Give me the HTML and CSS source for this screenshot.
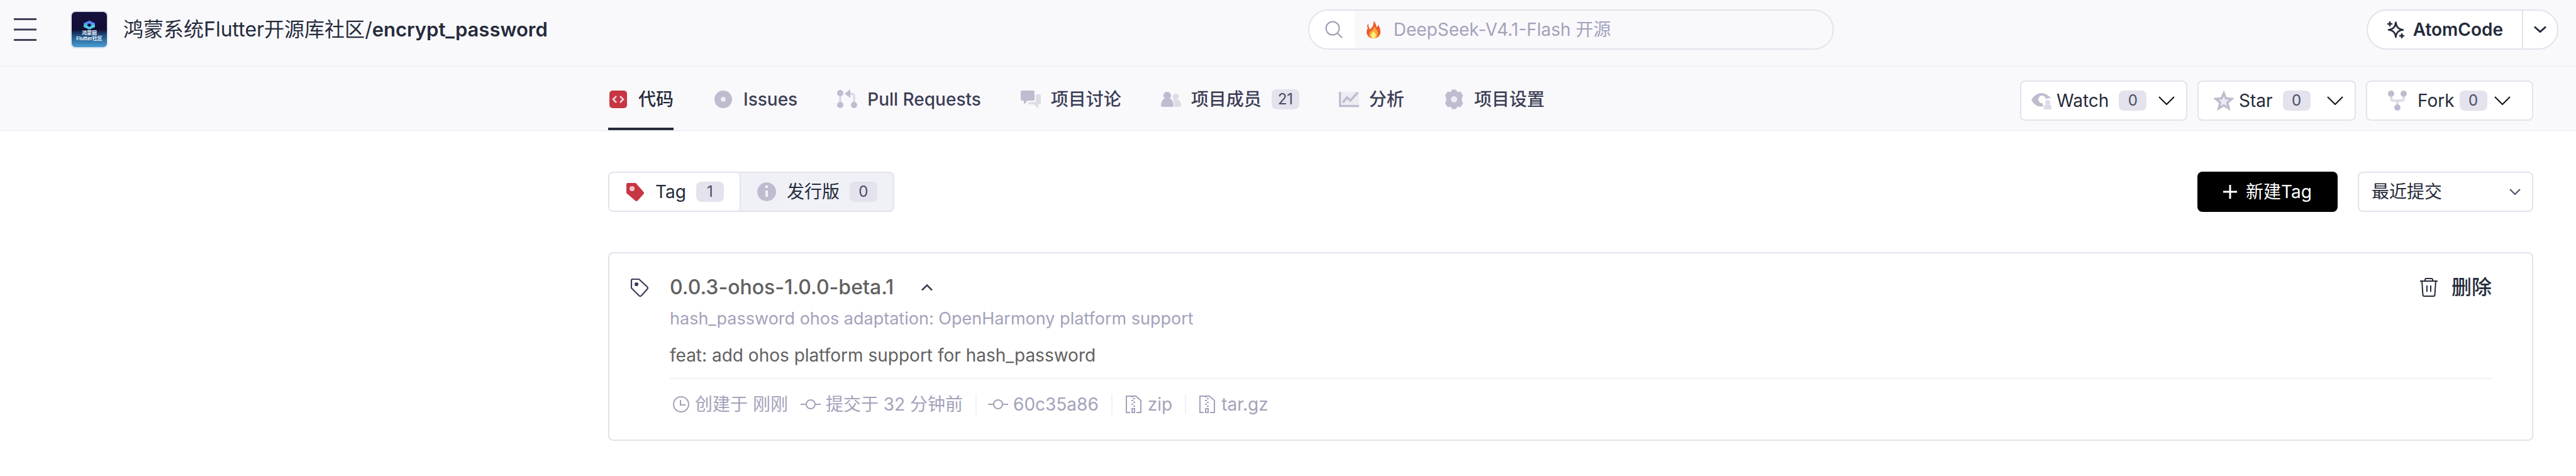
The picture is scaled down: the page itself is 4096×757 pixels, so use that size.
FILE: index.html
```html
<!DOCTYPE html>
<html lang="zh-CN">
<head>
    <meta charset="UTF-8">
    <meta name="viewport" content="width=device-width, initial-scale=1.0">
    <title>encrypt_password - Tag</title>
    <link rel="stylesheet" href="styles.css">
</head>
<body>
    <header class="topbar">
        <div class="topbar-left">
            <button class="menu-btn" type="button" aria-label="菜单">
                <svg width="36" height="36" viewBox="0 0 36 36" fill="none" stroke="#3f4158" stroke-width="3"><path d="M0 1.5h36M0 18h36M0 34.5h36"/></svg>
            </button>
            <div class="logo" aria-hidden="true">
                <svg width="20" height="16" viewBox="0 0 20 16"><path d="M10 1l9 4v6l-9 4-9-4V5z" fill="#4fc9e6"/><path d="M10 1l9 4v3l-9-3-9 3V5z" fill="#5b83f2"/><path d="M10 5l4 3-4 3-4-3z" fill="#0d1238"/></svg>
                <span class="logo-text">鸿蒙圈</span>
                <span class="logo-text">Flutter社区</span>
            </div>
            <h1 class="repo-title"><a href="#">鸿蒙系统Flutter开源库社区</a>/<a href="#" class="repo-name">encrypt_password</a></h1>
        </div>

        <form class="search">
            <label class="search-icon" for="search">
                <svg width="28" height="28" viewBox="0 0 28 28" fill="none" stroke="#9b9bb0" stroke-width="2"><circle cx="12" cy="12" r="10.5"/><path d="M20 20l7 7"/></svg>
            </label>
            <div class="search-body">
                <svg width="24" height="30" viewBox="0 0 24 30"><path d="M12 1c4 4 4 7 5 10 2 0 2-3 2-4 3 4 4 8 4 12 0 6-5 10-11 10S1 25 1 19c0-4 2-6 3-9 1 2 2 3 2 5 4-3 7-8 6-14z" fill="#ec5a2c"/><path d="M2 8l2-2 0 5-2 1z" fill="#e9622f"/><path d="M13 9c1 4 6 6 6 12 0 5-3 8-7 8s-7-3-7-7 4-4 6-7c1-2 2-4 2-6z" fill="#f9a53a"/><path d="M12 17c1 3 4 4 4 8 0 2-2 4-4 4s-4-2-4-4c0-4 3-5 4-8z" fill="#fff27a"/></svg>
                <input id="search" type="text" placeholder="DeepSeek-V4.1-Flash 开源">
            </div>
        </form>

        <div class="atom">
            <button class="atom-main" type="button">
                <svg width="28" height="28" viewBox="0 0 28 28" fill="none" stroke="#252b3a" stroke-width="2.6" stroke-linejoin="round" stroke-linecap="round"><path d="M14.500 2.500c.8 7.500 4 10.700 11.500 12-7.500 1-10.700 4-11.500 11.500-1-7.500-4-10.500-11.500-11.500 7.500-1.300 10.500-4.500 11.500-12z"/><path d="M5 2v6M2 5h6M24 21v6M21 24h6"/></svg>
                AtomCode
            </button>
            <button class="atom-more" type="button" aria-label="更多">
                <svg width="20" height="12" viewBox="0 0 20 12" fill="none" stroke="#252b3a" stroke-width="3"><path d="M1 1.500l9 8 9-8"/></svg>
            </button>
        </div>
    </header>

    <nav class="navbar">
        <div class="nav-tabs">
            <a href="#" class="nav-item active">
                <svg width="32" height="32" viewBox="0 0 32 32"><rect x="2" y="2" width="28" height="28" rx="5" fill="#c73643"/><path d="M13 11l-5 5 5 5M19 11l5 5-5 5" fill="none" stroke="#f3d3d7" stroke-width="2.600"/></svg>
                代码
            </a>
            <a href="#" class="nav-item">
                <svg width="32" height="32" viewBox="0 0 32 32"><circle cx="16" cy="16" r="14" fill="#bfbcd0"/><circle cx="16" cy="16" r="4" fill="#ececf2"/></svg>
                Issues
            </a>
            <a href="#" class="nav-item">
                <svg width="32" height="32" viewBox="0 0 32 32"><path d="M5 6v20M20 7h3q4 0 4 5v14" fill="none" stroke="#dedde7" stroke-width="4"/><g fill="#bfbcd0"><circle cx="5" cy="6" r="5"/><circle cx="5" cy="25" r="5"/><circle cx="27" cy="25" r="5"/><path d="M12 7l9-7v14z"/></g></svg>
                Pull Requests
            </a>
            <a href="#" class="nav-item">
                <svg width="32" height="32" viewBox="0 0 32 32"><path d="M24 8h6q2 0 2 2v12q0 2-2 2h-2v7l-7-7h-9q-1 0-1-1l3-3h8q2 0 2-2z" fill="#dedde7"/><path d="M2 2h18q2 0 2 2v12q0 2-2 2h-9l-6 6v-6H2q-2 0-2-2V4q0-2 2-2z" fill="#bfbcd0"/></svg>
                项目讨论
            </a>
            <a href="#" class="nav-item">
                <svg width="32" height="32" viewBox="0 0 32 32"><path d="M20 28h10q2 0 2-2c0-6-3-9-6-10a5 5 0 1 0-5 0l-2 1c2 3 3 7 1 11z" fill="#dedde7"/><path d="M10 4a6 6 0 0 1 4 10.500c4 2 6 6 6 11.500q0 2-2 2H2q-2 0-2-2c0-5 2-9.500 6-11.500A6 6 0 0 1 10 4z" fill="#bfbcd0"/></svg>
                项目成员
                <span class="badge">21</span>
            </a>
            <a href="#" class="nav-item">
                <svg width="32" height="32" viewBox="0 0 32 32"><path d="M3 4h29v20H3z" fill="#ececf2"/><path d="M1.500 4v22.500H32" fill="none" stroke="#bfbcd0" stroke-width="3.500"/><path d="M6 21l7-8 5 5L30 5" fill="none" stroke="#bfbcd0" stroke-width="3.500"/></svg>
                分析
            </a>
            <a href="#" class="nav-item">
                <svg width="32" height="32" viewBox="0 0 32 32"><path d="M13 1h6l2 4 5-1 4 6-2 3v6l2 3-4 6-5-1-2 4h-6l-2-4-5 1-4-6 2-3v-6l-2-3 4-6 5 1z" fill="#bfbcd0" stroke="#bfbcd0" stroke-linejoin="round"/><circle cx="16" cy="16" r="5" fill="#ececf2"/></svg>
                项目设置
            </a>
        </div>

        <div class="repo-actions">
            <div class="split watch">
                <button class="split-main" type="button">
                    <svg width="32" height="32" viewBox="0 0 32 32"><path d="M0 15C4 8 10 4 16 4s12 4 16 9c-4-2-7-1-9 1a6 6 0 1 0-5 6l1 5C10 27 4 22 0 15z" fill="#bfbcd0"/><path d="M26 15a4 4 0 0 1 3 7q3 1 3 4v4H20v-4q0-3 3-4a4 4 0 0 1 3-7z" fill="#dedde7"/></svg>
                    <span>Watch</span>
                    <span class="badge">0</span>
                </button>
                <button class="split-more" type="button" aria-label="Watch 选项">
                    <svg width="26" height="14" viewBox="0 0 26 14" fill="none" stroke="#111" stroke-width="2"><path d="M1 1l12 12L25 1"/></svg>
                </button>
            </div>
            <div class="split star">
                <button class="split-main" type="button">
                    <svg width="32" height="32" viewBox="0 0 32 32"><path d="M16 4l3.500 8.500 9.500.7-7.300 6 2.300 9.300-8-5-8 5 2.300-9.300-7.300-6 9.500-.7z" fill="#ececf2" stroke="#bfbcd0" stroke-width="3.500"/></svg>
                    <span>Star</span>
                    <span class="badge">0</span>
                </button>
                <button class="split-more" type="button" aria-label="Star 选项">
                    <svg width="26" height="14" viewBox="0 0 26 14" fill="none" stroke="#111" stroke-width="2"><path d="M1 1l12 12L25 1"/></svg>
                </button>
            </div>
            <div class="split fork">
                <button class="split-main" type="button">
                    <svg width="32" height="32" viewBox="0 0 32 32"><path d="M6 6v6q0 4 4 4h12q4 0 4-4V6M16 16v10" fill="none" stroke="#dedde7" stroke-width="4"/><g fill="#bfbcd0"><circle cx="6" cy="5" r="5"/><circle cx="26" cy="5" r="5"/><circle cx="16" cy="27" r="5"/></g></svg>
                    <span>Fork</span>
                    <span class="badge">0</span>
                </button>
                <button class="split-more" type="button" aria-label="Fork 选项">
                    <svg width="26" height="14" viewBox="0 0 26 14" fill="none" stroke="#111" stroke-width="2"><path d="M1 1l12 12L25 1"/></svg>
                </button>
            </div>
        </div>
    </nav>

    <main class="content">
        <div class="toolbar">
            <div class="tabs">
                <button class="tab selected" type="button">
                    <svg width="32" height="32" viewBox="0 0 32 32"><path d="M4 2h13l12 14q2 2 0 4l-9 10q-2 2-4 0L2 18V4q0-2 2-2z" fill="#c73643"/><circle cx="11" cy="11" r="4" fill="#f0c4c9"/></svg>
                    Tag
                    <span class="badge">1</span>
                </button>
                <button class="tab" type="button">
                    <svg width="32" height="32" viewBox="0 0 32 32"><circle cx="16" cy="16" r="15" fill="#bfbcd0"/><path d="M14 6h4v4h-4zM14 14h4v10h-4z" fill="#f0f1f7"/></svg>
                    发行版
                    <span class="badge">0</span>
                </button>
            </div>
            <div class="toolbar-right">
                <button class="new-btn" type="button">
                    <svg width="22" height="22" viewBox="0 0 22 22" stroke="#fff" stroke-width="3"><path d="M11 0v22M0 11h22"/></svg>
                    新建Tag
                </button>
                <div class="sort">
                    <select aria-label="排序">
                        <option>最近提交</option>
                        <option>最早提交</option>
                    </select>
                    <svg class="sort-arrow" width="18" height="10" viewBox="0 0 18 10" fill="none" stroke="#4a4c60" stroke-width="2"><path d="M1 1l8 8 8-8"/></svg>
                </div>
            </div>
        </div>

        <article class="tag-card">
            <svg class="tag-icon" width="32" height="32" viewBox="0 0 32 32" fill="none" stroke="#3c3e55" stroke-width="2.200" stroke-linejoin="round"><path d="M4 3h11l13 12q2 2 0 4l-9 10q-2 2-4 0L3 17V4z"/><circle cx="11" cy="11" r="2" fill="#3c3e55"/></svg>
            <div class="tag-body">
                <div class="tag-head">
                    <a href="#" class="tag-name">0.0.3-ohos-1.0.0-beta.1</a>
                    <button class="toggle" type="button" aria-label="收起">
                        <svg width="18" height="12" viewBox="0 0 18 12" fill="none" stroke="#3c3e55" stroke-width="2.500"><path d="M1 10.500l8-8 8 8"/></svg>
                    </button>
                    <button class="delete" type="button">
                        <svg width="32" height="32" viewBox="0 0 32 32" fill="none" stroke="#252b3a" stroke-width="2"><path d="M2 6h28M10 6V4q0-2 2-2h8q2 0 2 2v2M5 6l1.500 22q0 2 2 2h15q2 0 2-2L27 6M13 13v10M19 13v10"/></svg>
                        删除
                    </button>
                </div>
                <p class="tag-desc">hash_password ohos adaptation: OpenHarmony platform support</p>
                <p class="tag-commit">feat: add ohos platform support for hash_password</p>
                <div class="tag-meta">
                    <span class="meta-item">
                        <svg width="32" height="32" viewBox="0 0 32 32" fill="none" stroke="#a3a2ba" stroke-width="2"><circle cx="18" cy="16" r="12"/><path d="M17 9v8h8"/></svg>
                        创建于 刚刚
                    </span>
                    <span class="meta-item">
                        <svg width="32" height="32" viewBox="0 0 32 32" fill="none" stroke="#a3a2ba" stroke-width="2"><circle cx="16" cy="16" r="7"/><path d="M0 16h9M23 16h9"/></svg>
                        提交于 32 分钟前
                    </span>
                    <a href="#" class="meta-item divided">
                        <svg width="32" height="32" viewBox="0 0 32 32" fill="none" stroke="#a3a2ba" stroke-width="2"><circle cx="16" cy="16" r="7"/><path d="M0 16h9M23 16h9"/></svg>
                        60c35a86
                    </a>
                    <a href="#" class="meta-item divided">
                        <svg width="30" height="32" viewBox="0 0 30 32" fill="none" stroke="#a3a2ba" stroke-width="2"><path d="M10 29H4V3h15l8 7v19h-7M12 4h3M15 7h3M12 10h3M15 13h3M12 16h3M15 19h3M13 23h4v6h-4z"/></svg>
                        zip
                    </a>
                    <a href="#" class="meta-item divided">
                        <svg width="30" height="32" viewBox="0 0 30 32" fill="none" stroke="#a3a2ba" stroke-width="2"><path d="M10 29H4V3h15l8 7v19h-7M12 4h3M15 7h3M12 10h3M15 13h3M12 16h3M15 19h3M13 23h4v6h-4z"/></svg>
                        tar.gz
                    </a>
                </div>
            </div>
        </article>
    </main>
</body>
</html>
```

FILE: styles.css
```css
* {
    box-sizing: border-box;
}
body {
    margin: 0;
    font-family: Inter, "Noto Sans CJK SC", sans-serif;
    font-size: 28px;
    line-height: 40px;
    color: #252b3a;
    background: #fff;
}
a {
    color: inherit;
    text-decoration: none;
}
button, input, select {
    font: inherit;
    color: inherit;
    border: 0;
    padding: 0;
    background: none;
}
button {
    cursor: pointer;
}
svg {
    display: block;
    flex: none;
}
.badge {
    min-width: 44px;
    height: 32px;
    border-radius: 8px;
    background: #e3e2ed;
    color: #4a4c63;
    font-size: 24px;
    font-weight: 400;
    line-height: 32px;
    text-align: center;
}

/* top bar */
.topbar {
    display: grid;
    grid-template-columns: 25fr 836px 14fr;
    align-items: center;
    height: 106px;
    padding: 0 28px 10px 22px;
    background: #f9f9fc;
    border-bottom: 2px solid #f0f0f7;
}
.topbar-left {
    display: flex;
    align-items: center;
}
.logo {
    display: flex;
    flex-direction: column;
    align-items: center;
    width: 60px;
    height: 60px;
    margin: 0 24px 0 54px;
    padding-top: 13px;
    border: 2px solid #e3e2ed;
    border-radius: 8px;
    background: linear-gradient(#15123f 0, #120d33 50%, #1d4a7c 65%, #48a0d6 100%);
}
.logo-text {
    color: #e8f3fb;
    font-size: 8px;
    font-weight: 700;
    line-height: 9px;
}
.repo-title {
    margin: 0;
    font-size: 32px;
    font-weight: 400;
    line-height: 44px;
    white-space: nowrap;
}
.repo-name {
    font-size: 31px;
    font-weight: 600;
}
.search {
    display: flex;
    height: 64px;
    border: 2px solid #e3e2ed;
    border-radius: 32px;
    overflow: hidden;
}
.search-icon {
    display: flex;
    align-items: center;
    justify-content: center;
    width: 72px;
    padding-left: 6px;
    background: #fff;
}
.search-body {
    display: flex;
    flex: 1;
    align-items: center;
    gap: 20px;
    padding: 0 20px 0 18px;
}
.search-body input {
    flex: 1;
    outline: none;
}
.search-body input::placeholder {
    color: #a3a2ba;
    opacity: 1;
}
.atom {
    display: flex;
    justify-self: end;
    height: 64px;
    border: 2px solid #e3e2ed;
    border-radius: 32px;
    background: #fff;
}
.atom-main {
    display: flex;
    align-items: center;
    gap: 14px;
    padding: 0 30px;
    font-weight: 600;
}
.atom-more {
    display: flex;
    align-items: center;
    justify-content: center;
    width: 56px;
    border-left: 2px solid #e3e2ed;
}

/* repo navigation */
.navbar {
    display: flex;
    justify-content: space-between;
    height: 103px;
    padding: 0 68px 0 967px;
    background: #f9f9fc;
    border-bottom: 2px solid #f0f0f7;
}
.nav-tabs {
    display: flex;
    gap: 63px;
}
.nav-item {
    display: flex;
    align-items: center;
    gap: 16px;
    padding-top: 6px;
    color: #3c3e55;
    font-weight: 500;
    white-space: nowrap;
    border-bottom: 4px solid transparent;
}
.nav-item.active {
    color: #252b3a;
    border-bottom-color: #252b3a;
}
.repo-actions {
    display: flex;
    align-items: center;
    gap: 16px;
    padding-top: 6px;
}
.split {
    display: flex;
    width: 266px;
    height: 64px;
    border: 2px solid #e3e2ed;
    border-radius: 8px;
    background: #fff;
}
.split-main {
    display: flex;
    align-items: center;
    gap: 16px;
    padding-left: 16px;
}
.split-main svg {
    margin-right: -8px;
}
.split-more {
    display: flex;
    flex: 1;
    align-items: center;
    justify-content: center;
}
.split.star {
    width: 252px;
}
.star .split-main {
    padding-left: 24px;
}
.star .split-more {
    padding-left: 8px;
}
.fork .split-main {
    gap: 8px;
    padding-left: 32px;
}
.fork .split-main svg {
    margin-right: 8px;
}
.fork .split-more {
    flex: 0 0 48px;
}

/* page content */
.content {
    padding: 64px 68px 56px 967px;
}
.toolbar, .toolbar-right, .tabs {
    display: flex;
}
.toolbar {
    justify-content: space-between;
    margin-bottom: 64px;
}
.toolbar-right {
    gap: 32px;
}
.tabs {
    height: 64px;
    border: 2px solid #e3e2ed;
    border-radius: 8px;
    background: #f0f1f7;
}
.tab {
    display: flex;
    align-items: center;
    gap: 16px;
    padding: 0 25px;
}
.tab.selected {
    background: #fff;
    border-right: 2px solid #e3e2ed;
    border-radius: 6px;
}
.new-btn {
    display: flex;
    align-items: center;
    justify-content: center;
    gap: 14px;
    width: 223px;
    height: 64px;
    border-radius: 8px;
    background: #000;
    color: #fff;
}
.sort {
    position: relative;
}
.sort select {
    width: 279px;
    height: 64px;
    padding: 0 56px 0 20px;
    border: 2px solid #e3e2ed;
    border-radius: 8px;
    background: #fff;
    appearance: none;
}
.sort-arrow {
    position: absolute;
    top: 27px;
    right: 20px;
    pointer-events: none;
}

/* tag card */
.tag-card {
    display: flex;
    gap: 32px;
    padding: 30px 64px 40px 32px;
    border: 2px solid #e3e2ed;
    border-radius: 8px;
}
.tag-icon {
    margin-top: 8px;
}
.tag-body {
    flex: 1;
}
.tag-head {
    display: flex;
    align-items: center;
    height: 48px;
    margin-bottom: 6px;
    font-size: 32px;
    font-weight: 500;
}
.tag-name {
    color: #616161;
}
.toggle {
    margin-left: 44px;
}
.delete {
    display: flex;
    align-items: center;
    gap: 20px;
    margin-left: auto;
}
.tag-desc, .tag-commit {
    margin: 0;
}
.tag-desc {
    color: #a3a2ba;
    font-size: 27px;
}
.tag-commit {
    margin-top: 18px;
    padding-bottom: 16px;
    color: #616161;
    border-bottom: 2px solid #f0f0f7;
}
.tag-meta {
    display: flex;
    gap: 20px;
    margin-top: 24px;
    color: #a3a2ba;
}
.meta-item {
    display: flex;
    align-items: center;
    gap: 8px;
    height: 32px;
}
.meta-item.divided {
    padding-left: 18px;
    border-left: 2px solid #f0f0f7;
}
```
